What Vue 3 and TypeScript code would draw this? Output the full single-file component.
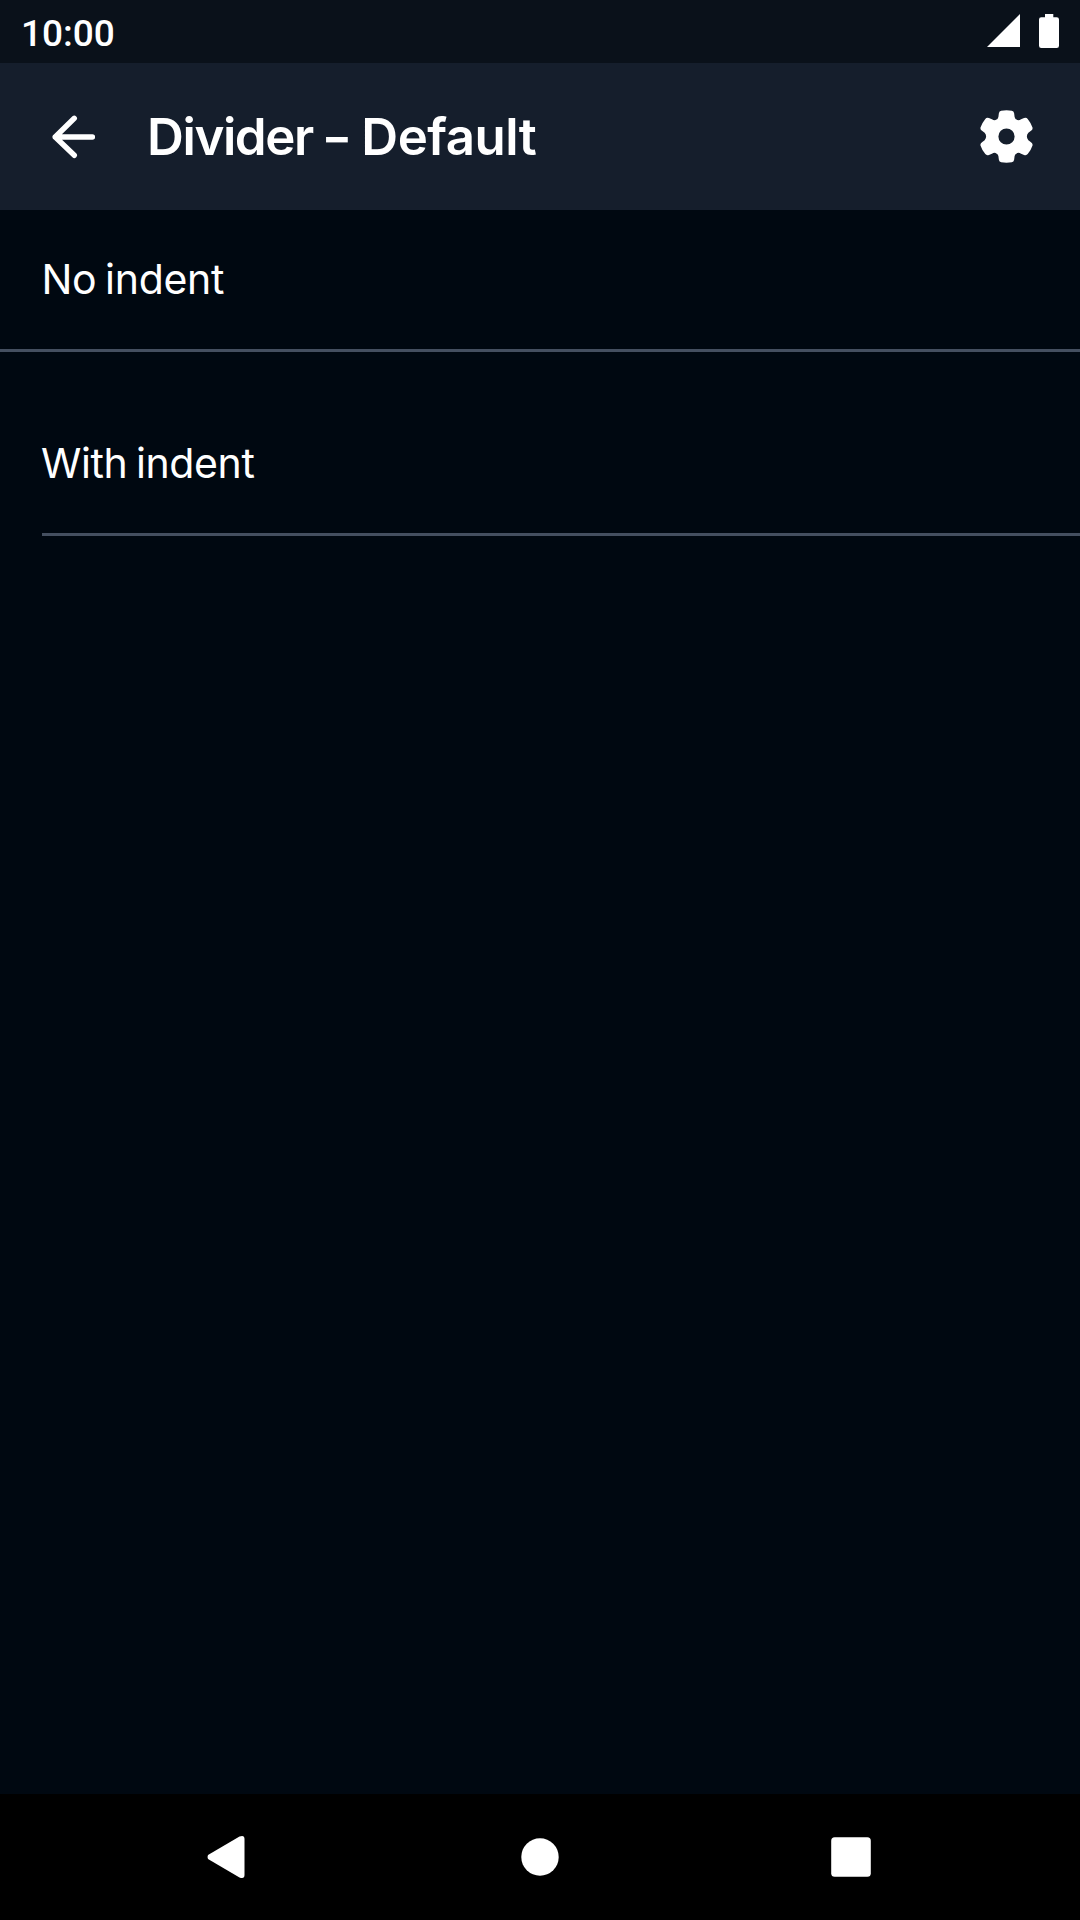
<script setup lang="ts">
interface Row {
  label: string
  indented: boolean
}

const time = '10:00'
const component = 'Divider'
const variant = 'Default'
const rows: Row[] = [
  { label: 'No indent', indented: false },
  { label: 'With indent', indented: true },
]
</script>

<template>
  <div class="screen">
    <header class="status">
      <span class="time">{{ time }}</span>
      <svg class="signal" viewBox="0 0 33 33"><path d="M33 0V33H0Z" /></svg>
      <svg class="battery" viewBox="0 0 20 34">
        <path d="M6 0H14.3V3.3H17.7Q20 3.3 20 5.6V31.7Q20 34 17.7 34H2.3Q0 34 0 31.7V5.6Q0 3.3 2.3 3.3H6Z" />
      </svg>
    </header>
    <div class="toolbar">
      <svg class="back" viewBox="0 0 44 44">
        <path d="M22.3 3.3L3.2 22L22.3 40.3M3.2 22H40.4" />
      </svg>
      <h1 class="title"><span class="component">{{ component }}</span> <span class="dash">-</span> <span>{{ variant }}</span></h1>
      <svg class="gear" viewBox="0 0 160 160">
        <path
          fill-rule="evenodd"
          d="M57 10Q58 3 64 2Q80 -.5 96 2Q102 3 103 10L104.500 21Q105.500 28 113 30.500Q118 32 124 28L133 24.500Q140 22 144 27Q154 39 158.500 53Q160 59 154 63L146 69Q137 80 146 91L154 97Q160 101 158.500 107Q154 121 144 133Q140 138 133 135.500L124 132Q118 128 113 129.500Q105.500 132 104.500 139L103 150Q102 157 96 158Q80 160.500 64 158Q58 157 57 150L55.500 139Q54.500 132 47 129.500Q42 128 36 132L27 135.500Q20 138 16 133Q6 121 1.500 107Q0 101 6 97L14 91Q23 80 14 69L6 63Q0 59 1.500 53Q6 39 16 27Q20 22 27 24.500L36 28Q42 32 47 30.500Q54.500 28 55.500 21ZM80 55.500A24.500 24.500 0 1 0 80 104.500A24.500 24.500 0 1 0 80 55.500Z"
        />
      </svg>
    </div>
    <main class="content">
      <section v-for="row in rows" :key="row.label" class="row" :class="{ indented: row.indented }">
        <p class="label">{{ row.label }}</p>
        <div class="divider"></div>
      </section>
    </main>
    <nav class="nav">
      <svg viewBox="0 0 42 42">
        <path d="M5 19L36.500 .6Q41.500 -1.200 41.500 3V39Q41.500 43.200 36.500 41.400L5 23Q4 21 5 19Z" />
      </svg>
      <svg viewBox="0 0 42 42"><circle cx="21" cy="21" r="18.700" /></svg>
      <svg viewBox="0 0 42 42"><rect x="1.200" y="1.200" width="39.600" height="39.600" rx="3.500" /></svg>
    </nav>
  </div>
</template>

<style>
body {
  background: #000811;
}
</style>

<style scoped>
.screen {
  display: flex;
  flex-direction: column;
  width: 1080px;
  height: 1920px;
  overflow: hidden;
  background: #000811;
  color: #fff;
  font-family: Inter, sans-serif;
}
svg {
  display: block;
  flex: none;
  fill: #fff;
  overflow: visible;
}
.status {
  display: flex;
  align-items: flex-start;
  box-sizing: border-box;
  height: 63px;
  padding: 14px 21px 0 21px;
  background: #0a111a;
}
.time {
  flex: 1;
  margin-top: -2px;
  font: 500 37px/43px Roboto, sans-serif;
}
.signal {
  width: 33px;
  height: 33px;
  margin-right: 19px;
}
.battery {
  width: 20px;
  height: 34px;
}
.toolbar {
  display: flex;
  align-items: center;
  box-sizing: border-box;
  height: 147px;
  padding: 0 47px 0 51.5px;
  background: #151e2c;
}
.back {
  width: 44px;
  height: 44px;
  fill: none;
  stroke: #fff;
  stroke-width: 5.4;
  stroke-linecap: round;
  stroke-linejoin: round;
}
.title {
  flex: 1;
  margin: 0 0 0 51.5px;
  font-size: 51px;
  font-weight: 600;
  line-height: 60px;
  letter-spacing: -0.5px;
  white-space: nowrap;
}
.component {
  letter-spacing: -1.4px;
}
.dash {
  display: inline-block;
  transform: scaleX(1.3);
  margin: 0 1px 0 -0.5px;
}
.gear {
  width: 53px;
  height: 53px;
}
.content {
  flex: 1;
}
.row {
  display: flex;
  flex-direction: column;
  height: 142px;
  margin-bottom: 42px;
}
.label {
  flex: 1;
  margin: 0;
  padding: 0 41.5px;
  font-size: 41px;
  line-height: 138px;
  letter-spacing: -0.3px;
  word-spacing: -2.5px;
}
.indented .label {
  padding-left: 41px;
  letter-spacing: -0.4px;
}
.divider {
  flex: none;
  height: 3px;
  background: #444f60;
}
.indented .divider {
  margin-left: 42px;
}
.nav {
  display: flex;
  align-items: center;
  justify-content: space-between;
  box-sizing: border-box;
  height: 126px;
  padding: 0 208px 0 202.5px;
  background: #000;
}
.nav svg {
  width: 42px;
  height: 42px;
}
.nav svg:nth-child(2) {
  margin-left: 5.5px;
}
</style>
